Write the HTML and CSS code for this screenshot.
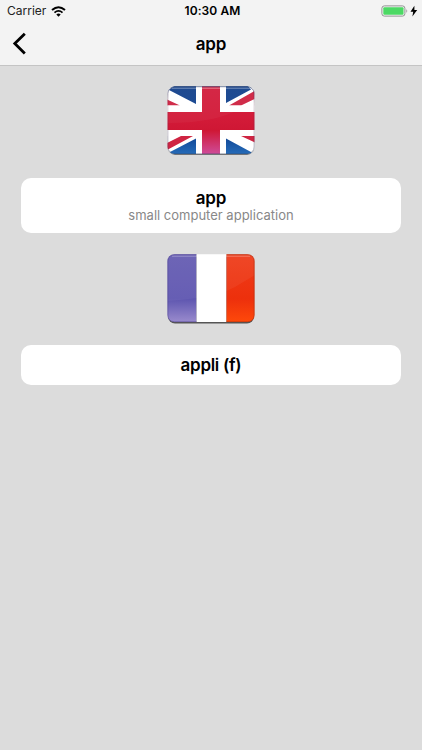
FILE: index.html
```
<!DOCTYPE html>
<html lang="en">
<head>
<meta charset="utf-8">
<title>app</title>
<link rel="stylesheet" href="styles.css">
</head>
<body>
<header class="top">
  <div class="status">
    <div class="network"><span class="carrier">Carrier</span>
      <svg class="wifi" width="15" height="11" viewBox="0 0 15 11"><path d="M1 4.1Q7.5-1.5 14 4.1" fill="none" stroke="#000" stroke-width="2"/><path d="M3.5 6.6Q7.5 3.2 11.5 6.6" fill="none" stroke="#000" stroke-width="1.8"/><path d="M5.3 8.4Q7.5 6.6 9.7 8.4L7.5 10.8Z"/></svg>
    </div>
    <span class="clock">10:30 AM</span>
    <svg class="battery" width="37" height="12" viewBox="0 0 37 12"><rect x=".9" y=".9" width="23" height="10.2" rx="2.4" fill="#f5f5f5" stroke="#929292"/><rect x="2.3" y="2.3" width="20.2" height="7.4" rx="1" fill="#4cd964"/><path d="M25.4 4q1.8 2 0 4z" fill="#929292"/><path d="M33.4 .8L29.5 6.8h2.7l-.8 4.6 4.8-6.4h-2.8z"/></svg>
  </div>
  <nav class="nav">
    <svg class="back" width="16" height="24" viewBox="0 0 16 24"><path d="M12.8 1.7L2.8 11.6l10 9.9" fill="none" stroke="#000" stroke-width="2.8"/></svg>
    <h1 class="title">app</h1>
    <span></span>
  </nav>
</header>
<main class="content">
  <svg class="flag" width="102" height="82" viewBox="0 0 102 82">
    <defs>
      <clipPath id="shape"><rect x="7.5" y="6.3" width="87" height="67.7" rx="7"/></clipPath>
      <linearGradient id="ukblue" gradientUnits="userSpaceOnUse" x1="0" y1="6" x2="0" y2="74"><stop stop-color="#16438c"/><stop offset=".75" stop-color="#104696"/><stop offset="1" stop-color="#256bb8"/></linearGradient>
      <linearGradient id="ukred" gradientUnits="userSpaceOnUse" x1="0" y1="6" x2="0" y2="74"><stop stop-color="#d3203f"/><stop offset=".45" stop-color="#d31b39"/><stop offset=".65" stop-color="#cf1734"/><stop offset="1" stop-color="#cf4c99"/></linearGradient>
      <linearGradient id="edge" x1="0" y1="0" x2="0" y2="1"><stop stop-color="#243b69" stop-opacity=".8"/><stop offset=".25" stop-color="#552344" stop-opacity=".25"/><stop offset="1" stop-color="#344666" stop-opacity=".5"/></linearGradient>
    </defs>
    <rect x="8" y="7.6" width="86" height="67.3" rx="7" fill="#777"/>
    <g clip-path="url(#shape)">
      <rect x="7" y="6" width="88" height="69" fill="#fff"/>
      <path fill="url(#ukblue)" d="M14 6H36V24L9 10ZM66 6H88L91 9.5L66 23ZM36 58.5V75H10L10 72ZM66 58.5V75H93L91 72Z"/>
      <path fill="#cf2442" d="M7 19.5L20 25.5H7ZM94.5 11V19L81 25.5H69ZM7 63L21 56H33L7 70ZM81 56H95V62.5Z"/>
      <path fill="#fff" d="M36 6H66V75H36ZM7 25.5H95V56H7Z"/>
      <path fill="url(#ukred)" d="M42 6H60V32H95V50H60V75H42V50H7V32H42Z"/>
      <path d="M7 43Q55 43 80 29L95 20V6H7Z" fill="#fff" opacity=".04"/>
      <path d="M12 8.2H90" stroke="#fff" stroke-opacity=".5" stroke-width=".8"/>
    </g>
    <rect x="7.9" y="6.7" width="86.2" height="67" rx="6.7" fill="none" stroke="url(#edge)" stroke-width=".8"/>
  </svg>
  <section class="card">
    <h2 class="word">app</h2>
    <p class="note">small computer application</p>
  </section>
  <svg class="flag" width="102" height="82" viewBox="0 0 102 82">
    <defs>
      <linearGradient id="frblue" x1="0" y1="0" x2="0" y2="1"><stop stop-color="#675db3"/><stop offset=".65" stop-color="#5e56b0"/><stop offset="1" stop-color="#9c8dce"/></linearGradient>
      <linearGradient id="frred" x1="0" y1="0" x2="0" y2="1"><stop stop-color="#ef3d1c"/><stop offset=".65" stop-color="#ed300c"/><stop offset="1" stop-color="#ff4a0a"/></linearGradient>
    </defs>
    <rect x="8" y="7.6" width="86" height="67.9" rx="7" fill="#555"/>
    <g clip-path="url(#shape)">
      <rect x="7" y="6" width="29.5" height="69" fill="url(#frblue)"/>
      <rect x="36.5" y="6" width="30" height="69" fill="#fff"/>
      <rect x="66.5" y="6" width="29" height="69" fill="url(#frred)"/>
      <path d="M7 53Q60 50 80 36L95 27V6H7Z" fill="#fff" opacity=".05"/>
      <path d="M12 8.2H90" stroke="#fff" stroke-opacity=".3"/>
    </g>
    <path d="M36.5 6.7H14.6Q7.9 6.7 7.9 13.4V67Q7.9 73.7 14.6 73.7H36.5" fill="none" stroke="#51468f" stroke-opacity=".65" stroke-width=".8"/>
    <path d="M66.5 6.7H87.4Q94.1 6.7 94.1 13.4V67Q94.1 73.7 87.4 73.7H66.5" fill="none" stroke="#a93213" stroke-opacity=".65" stroke-width=".8"/>
  </svg>
  <section class="card card-short">
    <h2 class="word">appli (f)</h2>
  </section>
</main>
</body>
</html>
```
FILE: styles.css
```
* { box-sizing: border-box; }
body {
  margin: 0;
  min-height: 750px;
  background: #dcdcdc;
  color: #000;
  font-family: Inter, "Liberation Sans", sans-serif;
}
h1, h2, p { margin: 0; }
svg { display: block; }
.top {
  height: 66px;
  background: #f3f3f3;
  border-bottom: 1px solid #c4c4c4;
}
.status {
  display: grid;
  grid-template-columns: 1fr auto 1fr;
  align-items: center;
  height: 22px;
  padding: 0 4px 0 7px;
}
.network { display: flex; align-items: center; gap: 5px; }
.carrier { font-size: 12px; line-height: 22px; letter-spacing: 0; color: #222; }
.clock {
  font-size: 12px;
  font-weight: 600;
  line-height: 22px;
  letter-spacing: .1px;
}
.battery { justify-self: end; }
.nav {
  display: grid;
  grid-template-columns: 1fr auto 1fr;
  align-items: center;
  height: 43px;
  padding: 0 12px;
}
.title { font-size: 17px; font-weight: 600; line-height: 24px; letter-spacing: -.1px; }
.content {
  display: flex;
  flex-direction: column;
  align-items: center;
  padding: 14px 21px 0;
}
.flag { flex: none; }
.card {
  width: 100%;
  height: 55px;
  margin: 16px 0 15px;
  padding-top: 10px;
  border-radius: 10px;
  background: #fff;
  text-align: center;
}
.card-short { height: 40px; margin-top: 15px; padding-top: 10px; }
.word { font-size: 17px; font-weight: 600; line-height: 21px; letter-spacing: -.1px; }
.card-short .word { letter-spacing: -.3px; }
.note { margin-top: -1px; font-size: 13px; line-height: 15px; color: #888; }
```
